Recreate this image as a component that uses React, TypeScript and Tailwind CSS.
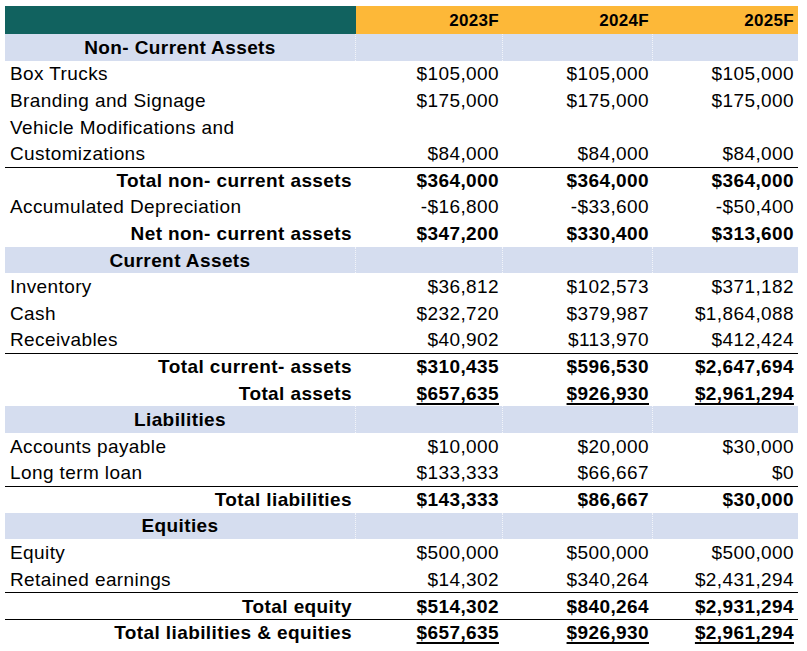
import React from "react";

type Row =
  | { kind: "section"; label: string }
  | {
      kind: "item";
      label: string;
      values: [string, string, string];
      total?: boolean;
      line?: boolean;
      underline?: boolean;
    };

const rows: Row[] = [
  { kind: "section", label: "Non- Current Assets" },
  { kind: "item", label: "Box Trucks", values: ["$105,000", "$105,000", "$105,000"] },
  { kind: "item", label: "Branding and Signage", values: ["$175,000", "$175,000", "$175,000"] },
  { kind: "item", label: "Vehicle Modifications and", values: ["", "", ""] },
  { kind: "item", label: "Customizations", values: ["$84,000", "$84,000", "$84,000"] },
  { kind: "item", label: "Total non- current assets", values: ["$364,000", "$364,000", "$364,000"], total: true, line: true },
  { kind: "item", label: "Accumulated Depreciation", values: ["-$16,800", "-$33,600", "-$50,400"] },
  { kind: "item", label: "Net non- current assets", values: ["$347,200", "$330,400", "$313,600"], total: true },
  { kind: "section", label: "Current Assets" },
  { kind: "item", label: "Inventory", values: ["$36,812", "$102,573", "$371,182"] },
  { kind: "item", label: "Cash", values: ["$232,720", "$379,987", "$1,864,088"] },
  { kind: "item", label: "Receivables", values: ["$40,902", "$113,970", "$412,424"] },
  { kind: "item", label: "Total current- assets", values: ["$310,435", "$596,530", "$2,647,694"], total: true, line: true },
  { kind: "item", label: "Total assets", values: ["$657,635", "$926,930", "$2,961,294"], total: true, underline: true },
  { kind: "section", label: "Liabilities" },
  { kind: "item", label: "Accounts payable", values: ["$10,000", "$20,000", "$30,000"] },
  { kind: "item", label: "Long term loan", values: ["$133,333", "$66,667", "$0"] },
  { kind: "item", label: "Total liabilities", values: ["$143,333", "$86,667", "$30,000"], total: true, line: true },
  { kind: "section", label: "Equities" },
  { kind: "item", label: "Equity", values: ["$500,000", "$500,000", "$500,000"] },
  { kind: "item", label: "Retained earnings", values: ["$14,302", "$340,264", "$2,431,294"] },
  { kind: "item", label: "Total equity", values: ["$514,302", "$840,264", "$2,931,294"], total: true, line: true },
  { kind: "item", label: "Total liabilities & equities", values: ["$657,635", "$926,930", "$2,961,294"], total: true, line: true, underline: true },
];

const grid = "grid w-[793px] grid-cols-[351px_147px_150px_145px]";

export default function App() {
  return (
    <div
      className="w-[807px] h-[651px] bg-white text-black text-[19px] tracking-[0.4px] leading-none"
      style={{ fontFamily: '"Liberation Sans", Arial, sans-serif' }}
    >
      <div className="pt-[6px] pl-[5px]">
        <div className={`${grid} h-[28px]`}>
          <div className="bg-[#11625f]" />
          {["2023F", "2024F", "2025F"].map((y) => (
            <div key={y} className="bg-[#fdb838] flex items-center justify-end pr-[4px] font-bold text-[17px] tracking-[0.3px]">
              {y}
            </div>
          ))}
        </div>
        {rows.map((r, i) =>
          r.kind === "section" ? (
            <div key={i} className={`${grid} h-[26.6px] bg-[#d5ddef] font-bold`}>
              <div className="flex items-center justify-center border-r border-dotted border-white/70">
                {r.label}
              </div>
              <div className="border-r border-dotted border-white/70" />
              <div className="border-r border-dotted border-white/70" />
              <div />
            </div>
          ) : (
            <div
              key={i}
              className={`${grid} h-[26.6px] ${r.line ? "border-t border-black" : ""} ${r.total ? "font-bold" : ""}`}
            >
              <div className={`flex items-center ${r.total ? "justify-end pr-[4px]" : "pl-[5px]"}`}>
                {r.label}
              </div>
              {r.values.map((v, j) => (
                <div key={j} className="flex items-center justify-end pr-[4px]">
                  <span className={r.underline ? "underline underline-offset-[3px] decoration-[1.5px]" : ""}>{v}</span>
                </div>
              ))}
            </div>
          )
        )}
      </div>
    </div>
  );
}
